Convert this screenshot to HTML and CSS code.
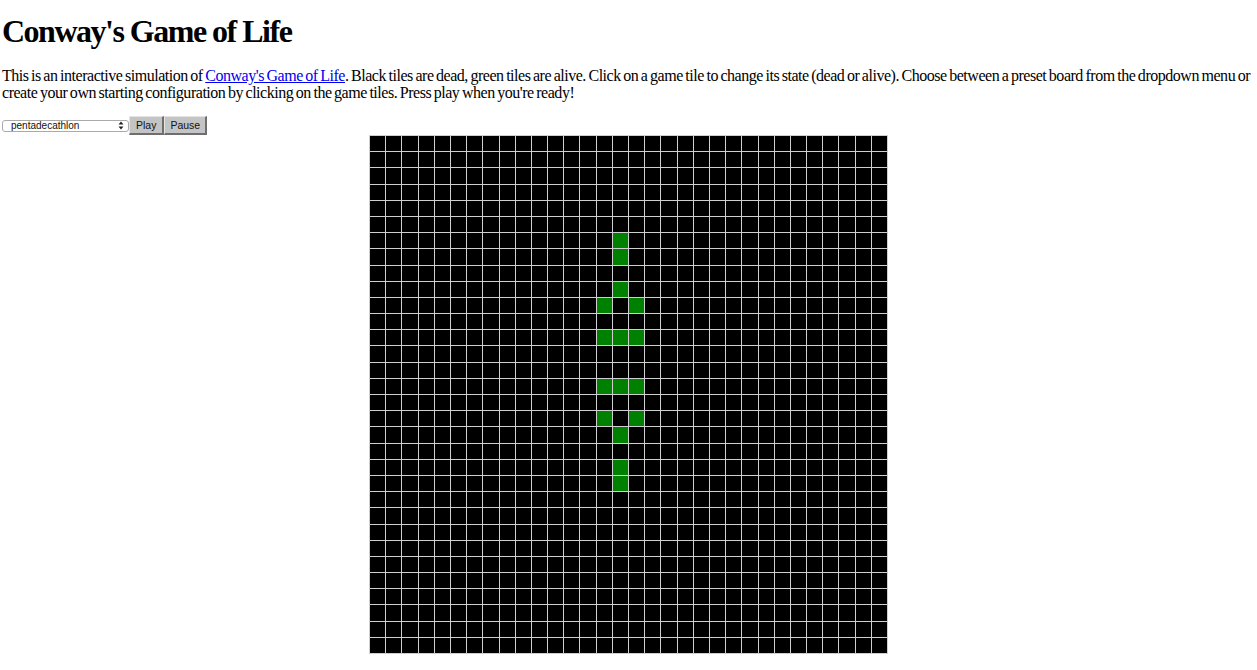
FILE: index.html
```html
<!DOCTYPE html>
<html>
<head>
<meta charset="utf-8">
<title>Conway's Game of Life</title>
<link rel="stylesheet" href="styles.css">
</head>
<body>
<h1 class="title">Conway's Game of Life</h1>
<p class="intro">This is an interactive simulation of <a href="#" class="link">Conway's Game of Life</a>. Black tiles are dead, green tiles are alive. Click on a game tile to change its state (dead or alive). Choose between a preset board from the dropdown menu or create your own starting configuration by clicking on the game tiles. Press play when you're ready!</p>
<div class="controls">
  <div class="select"><span class="select-text">pentadecathlon</span><span class="arrows"><svg width="6" height="9" viewBox="0 0 6 9"><path d="M0.5 3.5 L3 0.5 L5.5 3.5 Z M0.5 5.5 L3 8.5 L5.5 5.5 Z" fill="#222"/></svg></span></div>
  <button class="btn">Play</button>
  <button class="btn">Pause</button>
</div>
<div class="board" id="board"></div>
<script src="script.js"></script>
</body>
</html>
```

FILE: styles.css
```css
html, body {
  margin: 0;
  padding: 0;
  background: #fff;
}
body {
  font-family: "Liberation Serif", "Times New Roman", serif;
  color: #000;
}
.title {
  font-size: 32px;
  font-weight: bold;
  margin: 13px 0 0 2px;
  line-height: 36px;
  letter-spacing: -1.5px;
}
.intro {
  font-size: 16px;
  line-height: 17px;
  margin: 18px 0 0 2px;
  letter-spacing: -0.47px;
  word-spacing: -1px;
}
.link {
  color: #0000ee;
  text-decoration: underline;
}
.controls {
  display: flex;
  align-items: center;
  margin: 15px 0 0 2px;
  height: 19px;
}
.select {
  box-sizing: border-box;
  width: 127px;
  height: 12px;
  border: 1px solid #aaa;
  border-radius: 3px;
  background: #fff;
  display: flex;
  align-items: center;
  justify-content: space-between;
  padding: 0 4px 0 8px;
  font-family: "Liberation Sans", Arial, sans-serif;
  font-size: 10px;
  color: #111;
}
.select-text {
  line-height: 10px;
}
.arrows {
  display: flex;
  align-items: center;
}
.btn {
  box-sizing: border-box;
  height: 19px;
  margin: 0;
  padding: 0 6px;
  background: #c4c4c4;
  border-style: solid;
  border-width: 1px 2px 2px 1px;
  border-color: #e4e4e4 #6e6e6e #6e6e6e #e4e4e4;
  font-family: "Liberation Sans", Arial, sans-serif;
  font-size: 10.5px;
  color: #111;
  line-height: 15px;
}
.btn + .btn {
  padding: 0 5px;
}
.board {
  box-sizing: border-box;
  width: 519px;
  height: 519px;
  margin: 0 auto;
  padding: 1px;
  display: grid;
  grid-template-columns: repeat(32, 1fr);
  grid-template-rows: repeat(32, 1fr);
  gap: 1px;
  background: #cfcfcf;
}
.cell {
  background: #000;
}
.cell.alive {
  background: #008000;
}
```

FILE: script.js
```js
var board = document.getElementById('board');
var alive = {
  '6,15':1,'7,15':1,'9,15':1,'10,14':1,'10,16':1,
  '12,14':1,'12,15':1,'12,16':1,
  '15,14':1,'15,15':1,'15,16':1,
  '17,14':1,'17,16':1,'18,15':1,'20,15':1,'21,15':1
};
for (var r = 0; r < 32; r++) {
  for (var c = 0; c < 32; c++) {
    var d = document.createElement('div');
    d.className = alive[r + ',' + c] ? 'cell alive' : 'cell';
    board.appendChild(d);
  }
}
```
